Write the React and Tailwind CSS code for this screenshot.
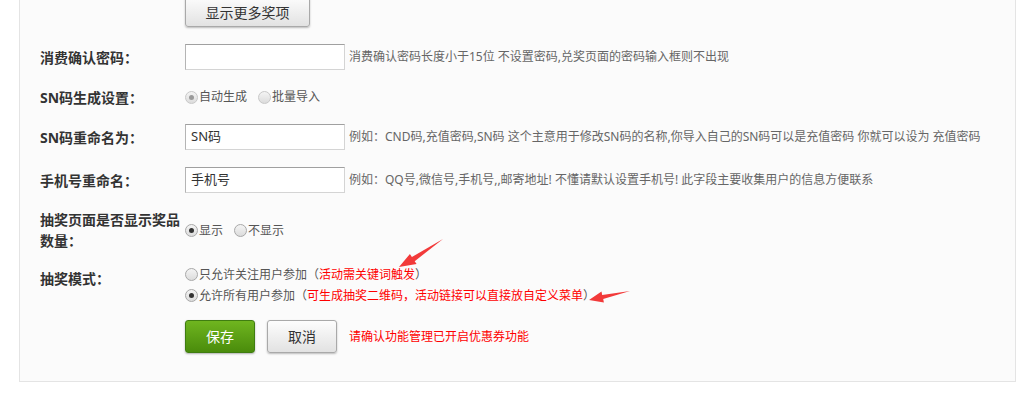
import React from 'react';

function Radio({ checked, faded }) {
  return (
    <span
      className={`inline-flex items-center justify-center w-[13px] h-[13px] rounded-full border ${faded ? 'border-[#c8c8c8]' : 'border-[#a8a8a8]'} bg-gradient-to-b from-[#f4f4f4] to-[#dcdcdc] mr-[1px] shrink-0`}
    >
      {checked && <span className={`w-[5px] h-[5px] rounded-full ${faded ? 'bg-[#9a9a9a]' : 'bg-[#333]'}`} />}
    </span>
  );
}

function Label({ children, className = '' }) {
  return (
    <div className={`w-[145px] shrink-0 text-[14px] font-bold text-[#333] ${className}`}>{children}</div>
  );
}

function TextInput({ value }) {
  return (
    <div className="w-[160px] h-[26px] shrink-0 border border-[#d4d4d4] border-t-[#a0a0a0] border-l-[#b4b4b4] bg-white flex items-center pl-[5px] text-[13px] text-[#333]">
      {value}
    </div>
  );
}

function Hint({ children, className = '' }) {
  return <span className={`ml-[4px] text-[12px] text-[#666] whitespace-nowrap ${className}`}>{children}</span>;
}

export default function App() {
  return (
    <div className="relative w-[1026px] h-[404px] bg-white overflow-hidden font-['Noto_Sans','Noto_Sans_CJK_SC',sans-serif]">
      <div className="ml-[19px] w-[997px] h-[382px] border-x border-b border-[#e4e4e4] bg-[#fbfbfb] pl-[20px]">
        {/* more prizes */}
        <div className="flex">
          <div className="w-[145px]" />
          <button className="mt-[-4px] w-[125px] h-[31px] rounded-[3px] border border-[#a9a9a9] bg-gradient-to-b from-[#fdfdfd] to-[#e2e2e2] shadow-[0_1px_2px_rgba(0,0,0,0.25)] text-[14px] text-[#333] leading-none pt-[2px]">
            显示更多奖项
          </button>
        </div>

        {/* password */}
        <div className="flex items-center mt-[17px] h-[26px]">
          <Label>消费确认密码：</Label>
          <TextInput value="" />
          <Hint>消费确认密码长度小于15位 不设置密码,兑奖页面的密码输入框则不出现</Hint>
        </div>

        {/* SN generate */}
        <div className="flex items-center mt-[17px] h-[20px]">
          <Label>SN码生成设置：</Label>
          <label className="flex items-center text-[12px] text-[#555]">
            <Radio checked faded />
            自动生成
          </label>
          <label className="flex items-center text-[12px] text-[#555] ml-[11px]">
            <Radio faded />
            批量导入
          </label>
        </div>

        {/* SN rename */}
        <div className="flex items-center mt-[17px] h-[26px]">
          <Label>SN码重命名为：</Label>
          <TextInput value="SN码" />
          <Hint className="ml-[0px]">例如：CND码,充值密码,SN码 这个主意用于修改SN码的名称,你导入自己的SN码可以是充值密码 你就可以设为 充值密码</Hint>
        </div>

        {/* phone rename */}
        <div className="flex items-center mt-[17px] h-[26px]">
          <Label>手机号重命名：</Label>
          <TextInput value="手机号" />
          <Hint className="ml-[3px]">例如：QQ号,微信号,手机号,,邮寄地址! 不懂请默认设置手机号! 此字段主要收集用户的信息方便联系</Hint>
        </div>

        {/* show prize count */}
        <div className="flex items-center mt-[16px] h-[42px]">
          <Label className="leading-[21px]">
            抽奖页面是否显示奖品
            <br />
            数量：
          </Label>
          <label className="flex items-center text-[12px] text-[#555] mt-[1px]">
            <Radio checked />
            显示
          </label>
          <label className="flex items-center text-[12px] text-[#555] ml-[11px] mt-[1px]">
            <Radio />
            不显示
          </label>
        </div>

        {/* draw mode */}
        <div className="flex items-start mt-[13px]">
          <Label className="leading-[21px] mt-[4px]">抽奖模式：</Label>
          <div className="flex flex-col text-[12px] text-[#555] leading-[21px]">
            <label className="flex items-center">
              <Radio />
              只允许关注用户参加（<span className="text-[#ff0000]">活动需关键词触发</span>）
            </label>
            <label className="flex items-center">
              <Radio checked />
              允许所有用户参加（<span className="text-[#ff0000]">可生成抽奖二维码，活动链接可以直接放自定义菜单</span>）
            </label>
          </div>
        </div>

        {/* actions */}
        <div className="flex items-center mt-[14px] h-[33px]">
          <div className="w-[145px]" />
          <button className="w-[70px] h-[33px] rounded-[3px] border border-[#3f7d10] bg-gradient-to-b from-[#6fb51f] to-[#4a8c0b] shadow-[0_1px_2px_rgba(0,0,0,0.3)] text-white text-[14px]">
            保存
          </button>
          <button className="ml-[12px] w-[70px] h-[33px] rounded-[3px] border border-[#a9a9a9] bg-gradient-to-b from-[#fdfdfd] to-[#e2e2e2] shadow-[0_1px_2px_rgba(0,0,0,0.25)] text-[#333] text-[14px]">
            取消
          </button>
          <span className="ml-[12px] text-[12px] text-[#ff0000]">请确认功能管理已开启优惠券功能</span>
        </div>
      </div>

      {/* annotation arrows */}
      <svg className="absolute left-0 top-0 pointer-events-none" width="1026" height="404" viewBox="0 0 1026 404">
        <polygon
          points="399,267 416.6,264.1 414.7,261.2 443,239 411.9,257.0 409.9,254.1"
          fill="#f23a3a"
        />
        <polygon
          points="589,300 603.9,302.4 603.2,299.1 630,291 602.2,294.9 601.5,291.6"
          fill="#f23a3a"
        />
      </svg>
    </div>
  );
}
